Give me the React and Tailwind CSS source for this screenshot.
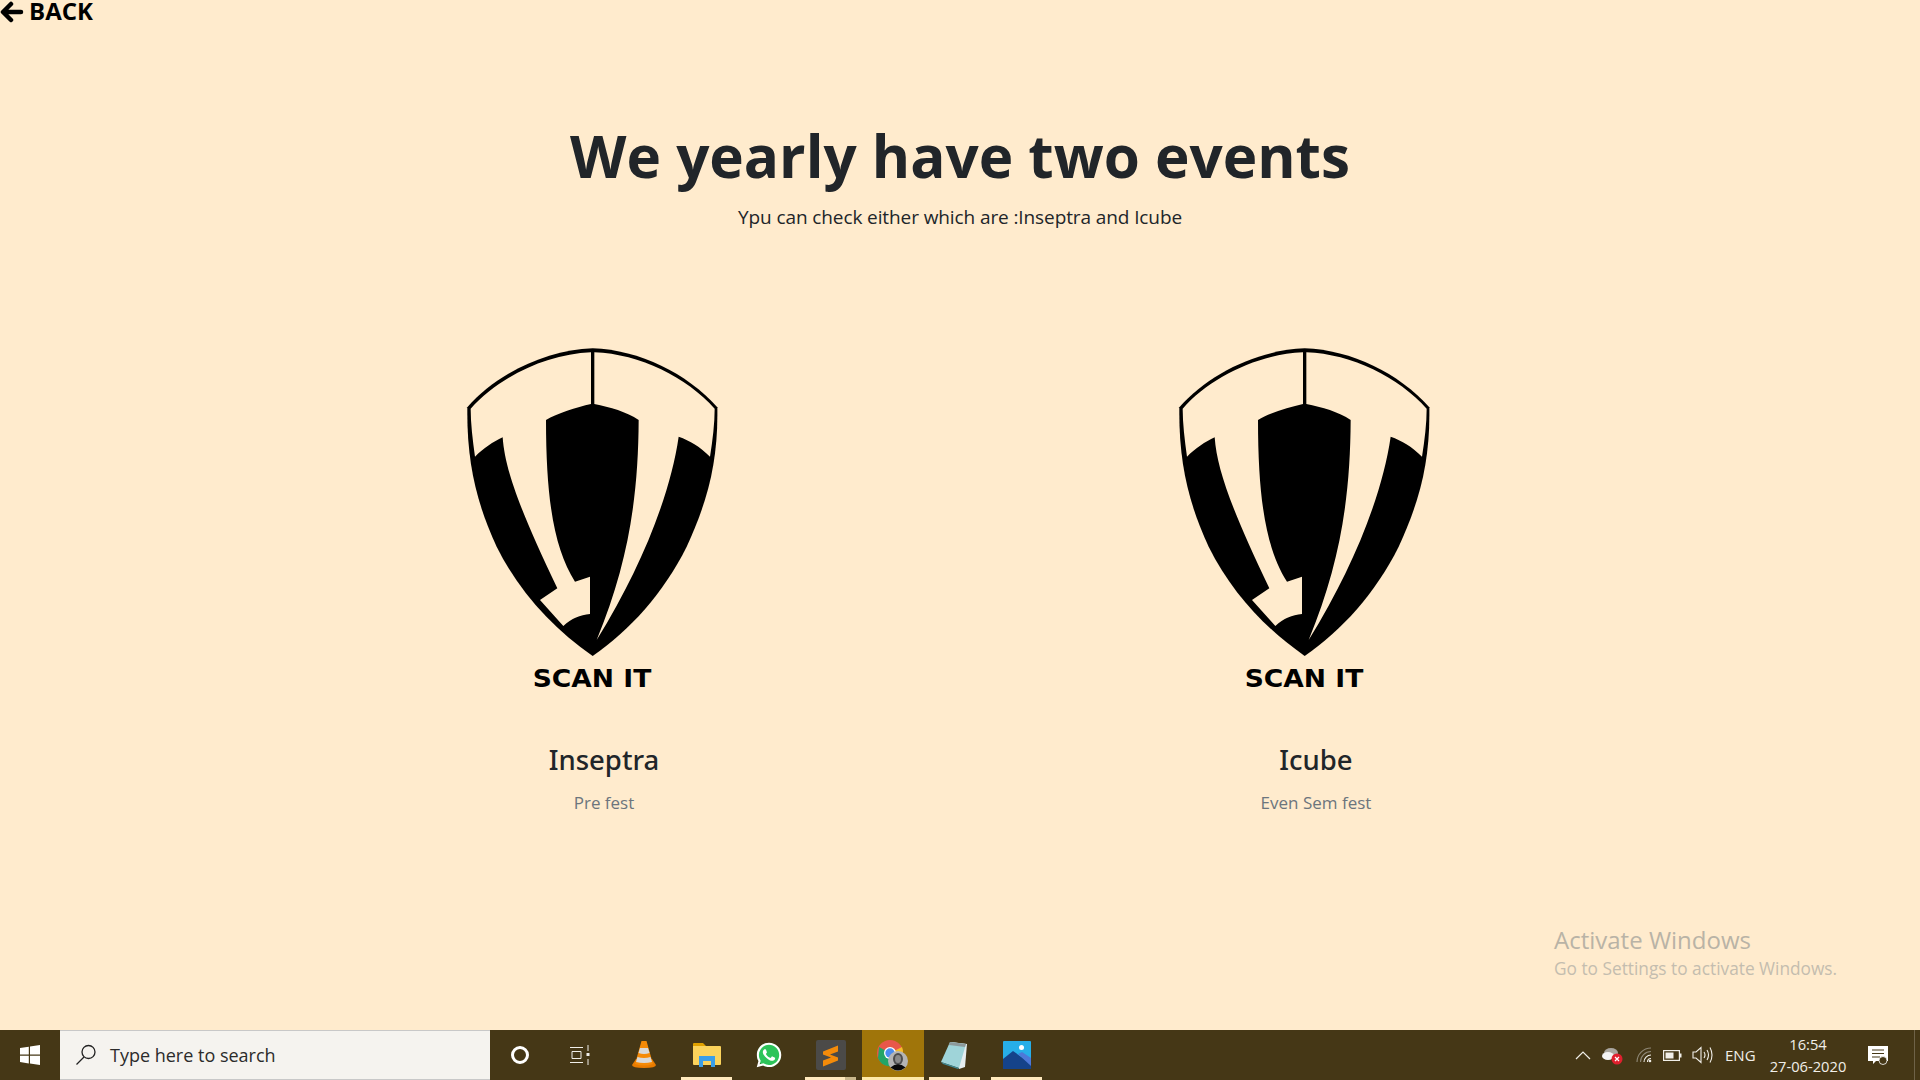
import React from "react";
import { FaWhatsapp } from "react-icons/fa";

const ShieldLogo = () => (
  <svg viewBox="0 0 960 1140" className="w-[320px] h-[380px] block">
    <path
      d="M458 55 C600 60 740 130 832 232 C835 400 800 520 740 650 C670 790 570 900 458 978 C340 895 240 790 170 650 C110 520 80 400 82 232 C170 130 320 60 458 55 Z"
      fill="#000"
    />
    <path
      d="M92 236 C175 142 320 72 453 67 V222 C410 232 350 250 318 270 C318 520 345 660 405 755 L450 740 V852 C420 855 395 865 370 888 L300 810 L352 775 C240 540 195 420 188 322 C160 335 130 355 105 380 C98 330 92 280 92 236 Z"
      fill="#ffebcd"
    />
    <path
      d="M463 67 C600 72 740 142 824 236 C824 280 818 330 810 380 C780 350 750 332 716 320 C690 500 600 720 470 930 C565 700 595 500 596 270 C560 245 510 232 463 222 Z"
      fill="#ffebcd"
    />
    <text
      x="278"
      y="1072"
      textLength="356"
      lengthAdjust="spacingAndGlyphs"
      fontFamily="'DejaVu Sans', sans-serif"
      fontWeight="700"
      fontSize="72"
      fill="#000"
    >
      SCAN IT
    </text>
  </svg>
);

const EventCol = ({ name, sub }) => (
  <div className="w-[712px] flex flex-col items-center">
    <div className="mr-2">
      <ShieldLogo />
    </div>
    <h3 className="text-[27.5px] leading-[34px] font-medium text-[#212529] mt-[33px] font-['Noto_Sans',sans-serif]">{name}</h3>
    <p className="text-[17px] leading-6 text-[#6c757d] mt-[14px]">{sub}</p>
  </div>
);

const WindowsIcon = () => (
  <svg viewBox="0 0 20 20" className="w-5 h-5">
    <path d="M0 3 L8.8 1.7 V9.5 H0 Z M10 1.5 L20 0 V9.5 H10 Z M0 10.7 H8.8 V18.4 L0 17.1 Z M10 10.7 H20 V20 L10 18.6 Z" fill="#fff" />
  </svg>
);

const VlcIcon = () => (
  <svg viewBox="0 0 26 30" className="w-[26px] h-[30px] mr-[3px]">
    <path d="M1 25 L5 19 H21 L25 25 Q25 28 13 28 Q1 28 1 25 Z" fill="#e87b00" />
    <path d="M10.5 1 H15.5 L22 24 Q13 27 4 24 Z" fill="#f58a07" />
    <path d="M9 8 H17 L18.6 13 Q13 15 7.5 13 Z" fill="#d9d9d9" />
    <path d="M6.5 17 Q13 19 19.5 17 L21 22 Q13 24 5 22 Z" fill="#d9d9d9" />
  </svg>
);

const FolderIcon = () => (
  <svg viewBox="0 0 28 24" className="w-7 h-6">
    <path d="M0 1 Q0 0 1 0 H10 L13 3 V7 H0 Z" fill="#e0a100" />
    <path d="M0 3 H27 Q28 3 28 4 V21 Q28 22 27 22 H1 Q0 22 0 21 Z" fill="#fbd35c" />
    <path d="M6 13 H22 V24 H18 V18 H10 V24 H6 Z" fill="#3a9ee8" />
  </svg>
);

const WhatsappIcon = () => (
  <div className="relative w-7 h-7 flex items-center justify-center">
    <div className="absolute inset-[2px] rounded-full bg-[#2cc45a]" />
    <FaWhatsapp className="relative text-white w-7 h-7" />
  </div>
);

const SublimeIcon = () => (
  <svg viewBox="0 0 30 30" className="w-[30px] h-[30px]">
    <rect width="30" height="30" rx="2" fill="#4b4a48" />
    <path d="M22 5.5 V11.5 L14 14.5 L22 17.5 V20.5 L7 26.5 V20.5 L15 17.5 L7 14.5 V11.5 Z" fill="#f48b0a" />
  </svg>
);

const ChromeIcon = () => (
  <svg viewBox="0 0 32 31" className="w-8 h-[31px]">
    <circle cx="13" cy="13" r="13" fill="#e8574a" />
    <path d="M13 13 L25 7 A13 13 0 0 1 26 13 L22 26 Z" fill="#f4bd2a" />
    <path d="M13 13 L22 23 A13 13 0 0 1 1 18 L2 7 Z" fill="#23a566" />
    <circle cx="13" cy="13" r="6" fill="#fff" />
    <circle cx="13" cy="13" r="4.7" fill="#4b8df0" />
    <circle cx="21" cy="21" r="10" fill="#b4b4b4" />
    <ellipse cx="21" cy="19" rx="5" ry="6" fill="#4d4d4d" />
    <ellipse cx="21" cy="19" rx="3" ry="4" fill="#8a8a8a" />
    <path d="M13.5 27.5 Q21 21 28.5 27.5 Q21 33.5 13.5 27.5 Z" fill="#0a0a0a" />
  </svg>
);

const NotepadIcon = () => (
  <svg viewBox="0 0 26 27" className="w-[26px] h-[27px] mr-[3px]">
    <path d="M10 0 L26 2 L24 25 L18 27 Z" fill="#e6eef0" />
    <path d="M9 0 L25 2 L18 26 L0 20 Z" fill="#9fd4d9" />
    <path d="M9 0 L25 2 L24 5 L8 3 Z" fill="#8d9a9c" />
    <path d="M0 20 L18 26 L17 27 L2 22 Z" fill="#3f8c99" />
  </svg>
);

const PhotosIcon = () => (
  <svg viewBox="0 0 28 28" className="w-7 h-7">
    <rect width="28" height="28" rx="1" fill="#27aee8" />
    <circle cx="18.5" cy="6.5" r="2.5" fill="#fff" />
    <path d="M0 28 V18 L10 10 L28 23 V28 Z" fill="#15438a" />
    <path d="M15 13 L19 11 L28 17 V25 Z" fill="#4d78d8" />
  </svg>
);

const TaskTile = ({ active, open, dim, children }) => (
  <div className={`relative w-[62px] h-full flex items-center justify-center ${active ? "bg-[#a0750a]" : ""}`}>
    {children}
    {open && <div className={`absolute bottom-0 left-[5px] h-[3px] bg-[#ffe9bd] ${dim ? "right-[17px]" : "right-[6px]"}`} />}
    {active && <div className="absolute bottom-0 left-0 right-0 h-[3px] bg-[#ffe9a8]" />}
    {dim && <div className="absolute bottom-0 left-[45px] right-[6px] h-[3px] bg-[#c9b78c]" />}
  </div>
);

const Tray = () => (
  <div className="ml-auto flex items-center h-full text-[#f1efe9]">
    <svg viewBox="0 0 16 9" className="w-4 h-[9px]">
      <path d="M1 8 L8 1 L15 8" fill="none" stroke="#f1efe9" strokeWidth="1.2" />
    </svg>
    <svg viewBox="0 0 22 20" className="w-[22px] h-5 ml-[11px]">
      <ellipse cx="9" cy="8" rx="7" ry="5" fill="#a9a69f" />
      <ellipse cx="6" cy="11" rx="6" ry="4" fill="#f3f3f3" />
      <circle cx="15" cy="14" r="5.5" fill="#e0202e" />
      <path d="M13 12 L17 16 M17 12 L13 16" stroke="#fff" strokeWidth="1.2" />
    </svg>
    <svg viewBox="0 0 16 16" className="w-4 h-4 ml-[12px]">
      <path d="M1 15 A14 14 0 0 1 15 1 M4.5 15 A10.5 10.5 0 0 1 15 4.5" fill="none" stroke="#8f8877" strokeWidth="1.1" />
      <path d="M8 15 A7 7 0 0 1 15 8" fill="none" stroke="#f1efe9" strokeWidth="1.1" />
      <path d="M11.5 15 A3.5 3.5 0 0 1 15 11.5" fill="none" stroke="#f1efe9" strokeWidth="1.1" />
      <circle cx="14" cy="14" r="1.3" fill="#f1efe9" />
    </svg>
    <svg viewBox="0 0 19 11" className="w-[19px] h-[11px] ml-[11px]">
      <rect x="0.6" y="0.6" width="15.8" height="9.8" fill="none" stroke="#f1efe9" strokeWidth="1.2" />
      <rect x="2.5" y="2.5" width="8" height="6" fill="#f1efe9" />
      <rect x="17" y="3.5" width="1.5" height="4" fill="#f1efe9" />
    </svg>
    <svg viewBox="0 0 22 18" className="w-[22px] h-[18px] ml-[10px]">
      <path d="M1 6 H4 L9 1.5 V16.5 L4 12 H1 Z" fill="none" stroke="#f1efe9" strokeWidth="1.1" />
      <path d="M12 6 Q14 9 12 12 M15 4 Q18 9 15 14 M18 1.5 Q22 9 18 16.5" fill="none" stroke="#f1efe9" strokeWidth="1.1" />
    </svg>
    <span className="ml-[11px] w-[32px] text-[15px]">ENG</span>
    <div className="ml-[12px] w-[78px] flex flex-col items-center text-[14.7px] leading-[22px]">
      <span>16:54</span>
      <span>27-06-2020</span>
    </div>
    <div className="w-[20px] ml-[21px] relative">
      <svg viewBox="0 0 20 19" className="w-5 h-[19px]">
        <path d="M0 0 H20 V15 H8 L5 18 V15 H0 Z" fill="#fff" />
        <path d="M4 4 H16 M4 7.5 H16 M4 11 H12" stroke="#453716" strokeWidth="1" />
        <circle cx="15" cy="14.5" r="4" fill="#453716" stroke="#fff" strokeWidth="0.8" />
      </svg>
    </div>
    <div className="w-px h-full bg-[#6e6248] ml-[26px] mr-[5px]" />
  </div>
);

const Taskbar = () => (
  <div className="h-[50px] shrink-0 bg-[#453716] flex items-stretch">
    <div className="w-[60px] flex items-center justify-center">
      <WindowsIcon />
    </div>
    <div className="w-[430px] bg-[#f5f3ef] border-y border-[#c8c8c8] flex items-center">
      <svg viewBox="0 0 22 22" className="w-[22px] h-[22px] ml-[15px]" fill="none" stroke="#222" strokeWidth="1.3">
        <circle cx="13.5" cy="8" r="6.5" />
        <path d="M9 13 L1.5 20.5" />
      </svg>
      <span className="ml-[13px] text-[18px] text-[#2b2b2b]">Type here to search</span>
    </div>
    <div className="w-[60px] flex items-center justify-center">
      <div className="w-[18px] h-[18px] rounded-full border-[3px] border-white" />
    </div>
    <div className="w-[64px] flex items-center pl-[19px]">
      <svg viewBox="0 0 22 20" className="w-[22px] h-5" fill="none" stroke="#f1efe9" strokeWidth="1">
        <path d="M1 2.5 H14 M1 17.5 H14 M3 6.5 H12 V13.5 H3 Z M19 0 V6 M19 14 V20" />
        <rect x="17.5" y="8" width="3" height="3" fill="#f1efe9" stroke="none" />
      </svg>
    </div>
    <TaskTile><VlcIcon /></TaskTile>
    <TaskTile open><FolderIcon /></TaskTile>
    <TaskTile><WhatsappIcon /></TaskTile>
    <TaskTile open dim><SublimeIcon /></TaskTile>
    <TaskTile active><ChromeIcon /></TaskTile>
    <TaskTile open><NotepadIcon /></TaskTile>
    <TaskTile open><PhotosIcon /></TaskTile>
    <Tray />
  </div>
);

export default function App() {
  return (
    <div className="h-screen flex flex-col bg-[#ffebcd] font-['Open_Sans',sans-serif] overflow-hidden">
      <main className="relative flex-1 min-h-0">
        <a className="flex items-center h-[24px] text-black font-bold text-2xl">
          <svg viewBox="0 0 24 24" className="w-[24px] h-[24px]" fill="none" stroke="#000" strokeWidth="4.5" strokeLinecap="round" strokeLinejoin="round">
            <path d="M21 12 H4 M11 4 L3 12 L11 20" />
          </svg>
          <span className="ml-[5px] leading-[20px] mb-[2px]">BACK</span>
        </a>

        <div className="text-center mt-[93px]">
          <h1 className="text-[58.4px] leading-[78px] font-bold text-[#212529]">We yearly have two events</h1>
          <p className="text-[19px] tracking-[-0.1px] leading-[30px] text-[#212529] mt-[7px]">Ypu can check either which are :Inseptra and Icube</p>
        </div>

        <div className="flex justify-center mt-[98px]">
          <EventCol name="Inseptra" sub="Pre fest" />
          <EventCol name="Icube" sub="Even Sem fest" />
        </div>

        <div className="absolute left-[1554px] top-[924px]">
          <div className="text-2xl leading-8 text-[#b9b3a6]">Activate Windows</div>
          <div className="text-[17.3px] leading-6 text-[#c4bdaf] mt-[1px]">Go to Settings to activate Windows.</div>
        </div>
      </main>
      <Taskbar />
    </div>
  );
}
